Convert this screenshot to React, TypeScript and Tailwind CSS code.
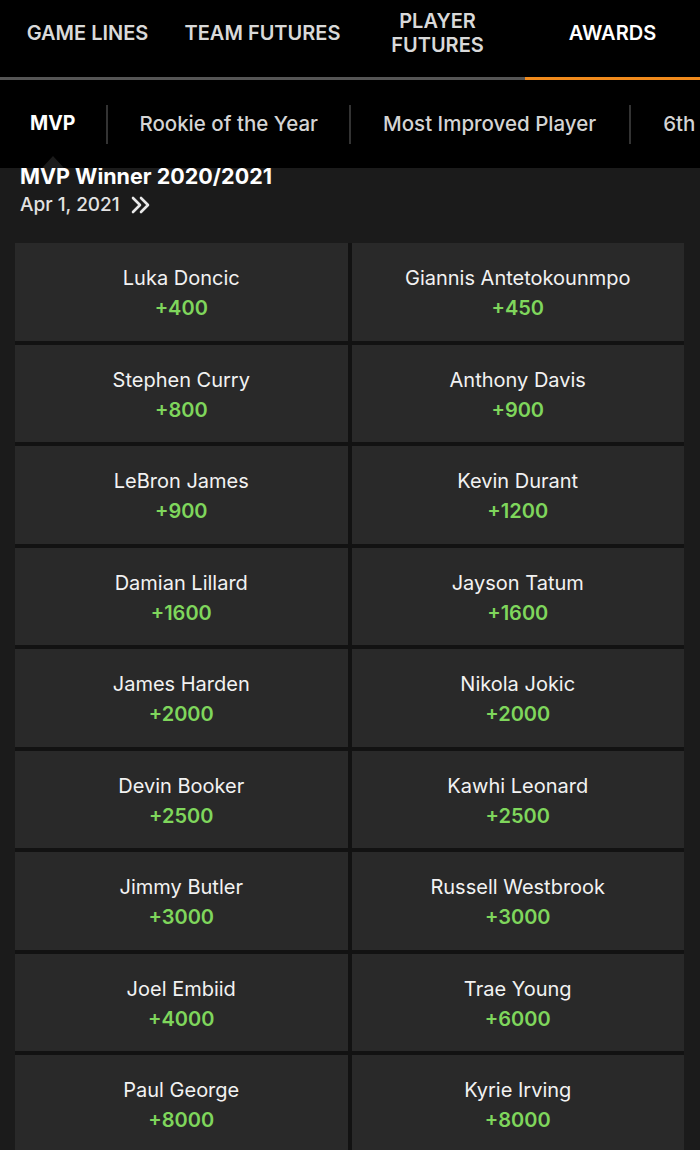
import React from "react";

const odds: [string, string][] = [
  ["Luka Doncic", "+400"],
  ["Giannis Antetokounmpo", "+450"],
  ["Stephen Curry", "+800"],
  ["Anthony Davis", "+900"],
  ["LeBron James", "+900"],
  ["Kevin Durant", "+1200"],
  ["Damian Lillard", "+1600"],
  ["Jayson Tatum", "+1600"],
  ["James Harden", "+2000"],
  ["Nikola Jokic", "+2000"],
  ["Devin Booker", "+2500"],
  ["Kawhi Leonard", "+2500"],
  ["Jimmy Butler", "+3000"],
  ["Russell Westbrook", "+3000"],
  ["Joel Embiid", "+4000"],
  ["Trae Young", "+6000"],
  ["Paul George", "+8000"],
  ["Kyrie Irving", "+8000"],
];

const font = { fontFamily: "Inter, Roboto, 'Liberation Sans', sans-serif" };

export default function App() {
  return (
    <div className="h-[1150px] w-[700px] overflow-hidden bg-[#1b1b1b]" style={font}>
      {/* Top nav */}
      <div className="bg-black">
        <div className="grid h-[77px] grid-cols-4 items-center pb-[11px] text-center text-[20px] font-semibold leading-[24px]">
          <div className="text-[#d9d9d9]">GAME LINES</div>
          <div className="text-[#d9d9d9]">TEAM FUTURES</div>
          <div className="text-[#d9d9d9]">
            PLAYER
            <br />
            FUTURES
          </div>
          <div className="text-white">AWARDS</div>
        </div>
        <div className="grid h-[3px] grid-cols-4">
          <div className="bg-[#555]" />
          <div className="bg-[#555]" />
          <div className="bg-[#555]" />
          <div className="bg-[#f08a1c]" />
        </div>
      </div>

      {/* Sub tabs */}
      <div className="relative flex h-[88px] items-center overflow-hidden whitespace-nowrap bg-black text-[20.5px] font-medium text-[#d4d4d4]">
        <div className="shrink-0 pl-[30px] pr-[31px] text-[19.5px] font-bold text-white">MVP</div>
        <div className="h-[39px] w-[2px] shrink-0 bg-[#333]" />
        <div className="shrink-0 px-[31px]">Rookie of the Year</div>
        <div className="h-[39px] w-[2px] shrink-0 bg-[#333]" />
        <div className="shrink-0 pl-[32px] pr-[33px]">Most Improved Player</div>
        <div className="h-[39px] w-[2px] shrink-0 bg-[#333]" />
        <div className="shrink-0 pl-[32px]">6th</div>
        <div className="absolute bottom-0 left-[42px] h-0 w-0 border-x-[11px] border-b-[12px] border-x-transparent border-b-[#1b1b1b]" />
      </div>

      {/* Header */}
      <div className="px-5">
        <div className="mt-[-5px] text-[21.5px] font-bold leading-[26px] text-white">MVP Winner 2020/2021</div>
        <div className="mt-[3px] flex items-center gap-[10px] text-[19px] font-medium leading-[26px] text-[#e2e2e2]">
          <span>Apr 1, 2021</span>
          <svg width="22" height="18" viewBox="0 0 22 18" fill="none" stroke="#e8e8e8" strokeWidth="2.6" strokeLinecap="round" strokeLinejoin="round">
            <path d="M3 2l7 7-7 7" />
            <path d="M11 2l7 7-7 7" />
          </svg>
        </div>
      </div>

      {/* Odds grid */}
      <div className="ml-[15px] mr-[16px] mt-[25px] grid grid-cols-2 auto-rows-[97.5px] gap-[4px] bg-[#121212]">
        {odds.map(([name, price]) => (
          <div key={name} className="flex flex-col items-center justify-center bg-[#292929] pt-[3px]">
            <div className="text-[20px] leading-[28px] text-[#f2f2f2]">{name}</div>
            <div className="mt-[2px] text-[20px] font-semibold leading-[28px] text-[#7fd65c]">{price}</div>
          </div>
        ))}
      </div>
    </div>
  );
}
